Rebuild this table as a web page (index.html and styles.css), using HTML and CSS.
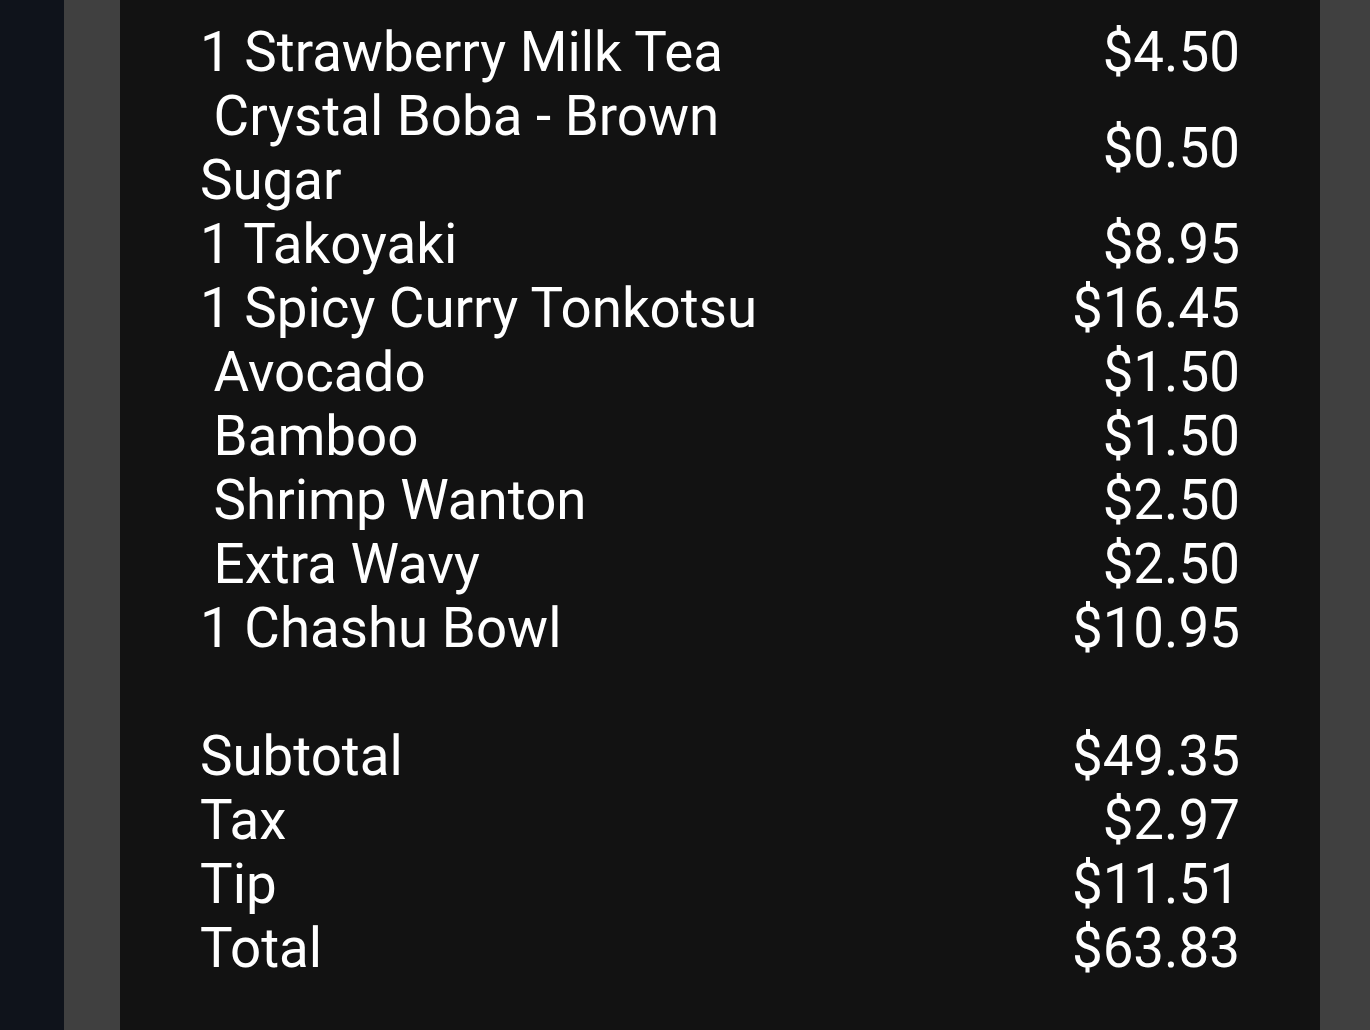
FILE: index.html
```html
<!DOCTYPE html>
<html lang="en">
<head>
<meta charset="utf-8">
<title>Receipt</title>
<link rel="stylesheet" href="styles.css">
</head>
<body>
<div class="page">
  <div class="rail"></div>
  <div class="frame">
    <main class="receipt">
      <table class="items">
        <colgroup><col class="name-col"><col class="price-col"></colgroup>
        <tbody>
          <tr><td class="name">1 Strawberry Milk Tea</td><td class="price">$4.50</td></tr>
          <tr><td class="name"> Crystal Boba - Brown Sugar</td><td class="price">$0.50</td></tr>
          <tr><td class="name">1 Takoyaki</td><td class="price">$8.95</td></tr>
          <tr><td class="name">1 Spicy Curry Tonkotsu</td><td class="price">$16.45</td></tr>
          <tr><td class="name"> Avocado</td><td class="price">$1.50</td></tr>
          <tr><td class="name"> Bamboo</td><td class="price">$1.50</td></tr>
          <tr><td class="name"> Shrimp Wanton</td><td class="price">$2.50</td></tr>
          <tr><td class="name"> Extra Wavy</td><td class="price">$2.50</td></tr>
          <tr><td class="name">1 Chashu Bowl</td><td class="price">$10.95</td></tr>
          <tr class="spacer"><td colspan="2"></td></tr>
          <tr><td class="name">Subtotal</td><td class="price">$49.35</td></tr>
          <tr><td class="name">Tax</td><td class="price">$2.97</td></tr>
          <tr><td class="name">Tip</td><td class="price">$11.51</td></tr>
          <tr><td class="name">Total</td><td class="price">$63.83</td></tr>
        </tbody>
      </table>
    </main>
  </div>
</div>
</body>
</html>
```
FILE: styles.css
```css
html, body {
  margin: 0;
  padding: 0;
  height: 100%;
  background: #0f131b;
}
.page {
  display: flex;
  min-height: 100%;
  background: #0f131b;
}
.rail {
  width: 64px;
  flex: 0 0 64px;
}
.frame {
  flex: 1;
  background: #404040;
  padding: 0 50px 0 56px;
  display: flex;
}
.receipt {
  flex: 1;
  background: #121212;
  padding: 20px 80px 0 80px;
  color: #ffffff;
  font-family: Roboto, "Noto Sans", sans-serif;
  font-size: 54.7px;
  line-height: 64px;
}
.items {
  width: 100%;
  border-collapse: collapse;
  table-layout: fixed;
}
.name-col { width: 60%; }
.items td {
  padding: 0;
  vertical-align: middle;
}
.name {
  white-space: pre-wrap;
  text-align: left;
}
.price {
  text-align: right;
  white-space: nowrap;
}
.spacer td {
  height: 64px;
}
```
